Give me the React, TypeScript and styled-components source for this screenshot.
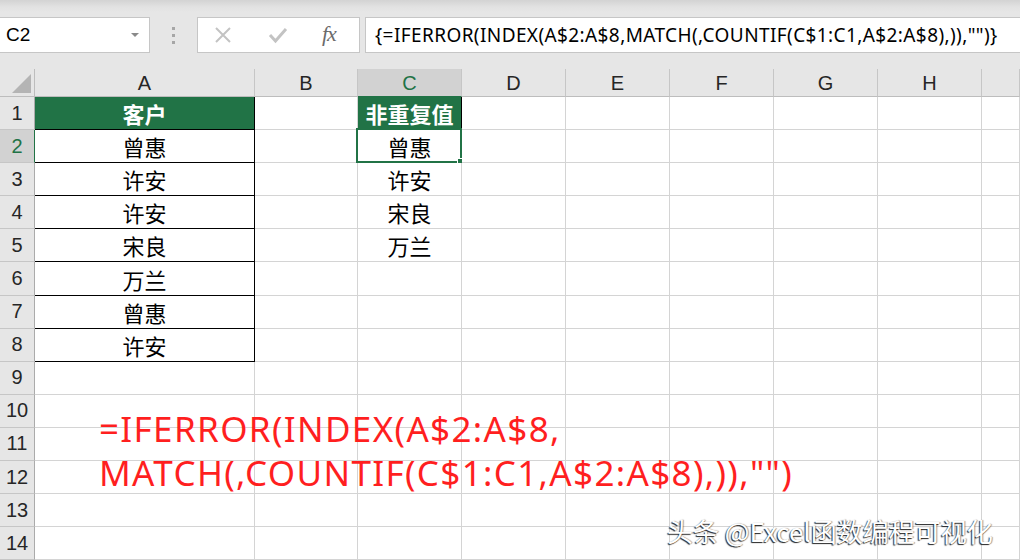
import React from 'react';
import styled, { createGlobalStyle } from 'styled-components';

const GlobalStyle = createGlobalStyle`
  html, body {
    margin: 0;
    padding: 0;
  }
  body {
    width: 1020px;
    height: 560px;
    overflow: hidden;
    background: #ffffff;
    font-family: "Liberation Sans", Arial, sans-serif;
  }
`;

const COLS = ['A', 'B', 'C', 'D', 'E', 'F', 'G', 'H', 'I'];
const ROW_COUNT = 14;
const GREEN = '#217346';

const colA = ['客户', '曾惠', '许安', '许安', '宋良', '万兰', '曾惠', '许安'];
const colC = ['非重复值', '曾惠', '许安', '宋良', '万兰'];

const FORMULA = '{=IFERROR(INDEX(A$2:A$8,MATCH(,COUNTIF(C$1:C1,A$2:A$8),)),"")}';

const Page = styled.div`
  width: 1020px;
  height: 560px;
  display: flex;
  flex-direction: column;
  background: #e6e6e6;
  position: relative;
  overflow: hidden;
`;

const FormulaBar = styled.div`
  height: 69px;
  flex-shrink: 0;
  box-sizing: border-box;
  padding-top: 17px;
  display: flex;
  align-items: flex-start;
  background: linear-gradient(#d3d3d3 0px, #e2e2e2 7px, #e6e6e6 12px);
`;

const NameBox = styled.div`
  width: 150px;
  height: 36px;
  box-sizing: border-box;
  background: #fff;
  border: 1px solid #c6c6c6;
  border-left: none;
  display: flex;
  align-items: center;
  justify-content: space-between;
  padding: 0 10px 0 6px;
  font-size: 19px;
  color: #000;
`;

const DropArrow = styled.span`
  width: 0;
  height: 0;
  border-left: 4px solid transparent;
  border-right: 4px solid transparent;
  border-top: 4px solid #8a8a8a;
`;

const Grip = styled.div`
  width: 47px;
  height: 36px;
  display: flex;
  flex-direction: column;
  align-items: center;
  justify-content: center;
  gap: 4px;
`;

const GripDot = styled.span`
  width: 3px;
  height: 3px;
  background: #a6a6a6;
`;

const FxBox = styled.div`
  width: 163px;
  height: 36px;
  box-sizing: border-box;
  background: #fff;
  border: 1px solid #c6c6c6;
  display: flex;
  align-items: center;
  padding-left: 16px;
  gap: 36px;
`;

const FxLabel = styled.span`
  font-family: "Liberation Serif", "Times New Roman", serif;
  font-style: italic;
  font-size: 22px;
  color: #6b6b6b;
  letter-spacing: -1px;
  margin-left: -2px;
  margin-top: -3px;
`;

const FormulaInput = styled.div`
  flex: 1;
  height: 36px;
  margin-left: 5px;
  box-sizing: border-box;
  background: #fff;
  border: 1px solid #c6c6c6;
  border-right: none;
  display: flex;
  align-items: center;
  padding-left: 9px;
  font-family: "Noto Sans", "Open Sans", sans-serif;
  font-size: 19px;
  letter-spacing: 0.4px;
  color: #000;
  white-space: nowrap;
`;

const Sheet = styled.div`
  flex: 1;
  display: grid;
  grid-template-columns: 35px 220px 103px 104px 104px 104px 104px 104px 104px 1fr;
  grid-template-rows: 28px repeat(${ROW_COUNT}, 33.1px);
  background: #fff;
  position: relative;
`;

const Corner = styled.div`
  background: #e6e6e6;
  border-right: 1px solid #bdbdbd;
  border-bottom: 1px solid #bdbdbd;
  box-sizing: border-box;
  position: relative;
  &::after {
    content: '';
    position: absolute;
    right: 3px;
    bottom: 3px;
    width: 0;
    height: 0;
    border-left: 19px solid transparent;
    border-bottom: 19px solid #b4b4b4;
  }
`;

const ColHead = styled.div<{ $active?: boolean }>`
  box-sizing: border-box;
  background: ${p => (p.$active ? '#d2d2d2' : '#e6e6e6')};
  border-right: 1px solid #c6c6c6;
  border-bottom: 1px solid ${p => (p.$active ? GREEN : '#bdbdbd')};
  display: flex;
  align-items: center;
  justify-content: center;
  padding-top: 2px;
  font-size: 20px;
  color: ${p => (p.$active ? GREEN : '#262626')};
`;

const RowHead = styled.div<{ $active?: boolean }>`
  box-sizing: border-box;
  background: ${p => (p.$active ? '#d2d2d2' : '#e6e6e6')};
  border-right: 1px solid ${p => (p.$active ? GREEN : '#ababab')};
  border-bottom: 1px solid #c6c6c6;
  display: flex;
  align-items: center;
  justify-content: center;
  font-size: 20px;
  color: ${p => (p.$active ? GREEN : '#262626')};
`;

const Cell = styled.div<{ $head?: boolean; $boxed?: boolean }>`
  box-sizing: border-box;
  position: relative;
  border-right: 1px solid ${p => (p.$boxed ? '#000' : '#d4d4d4')};
  border-bottom: 1px solid ${p => (p.$boxed ? '#000' : '#d4d4d4')};
  background: ${p => (p.$head ? GREEN : '#fff')};
  color: ${p => (p.$head ? '#fff' : '#000')};
  font-family: "Noto Sans CJK SC", "Noto Sans", sans-serif;
  font-size: 22px;
  font-weight: ${p => (p.$head ? 700 : 400)};
  display: flex;
  align-items: center;
  justify-content: center;
  white-space: nowrap;
`;

const SelectFrame = styled.div`
  position: absolute;
  left: -2px;
  top: -2px;
  right: -1px;
  bottom: -1px;
  border: 2px solid ${GREEN};
  pointer-events: none;
  &::after {
    content: '';
    position: absolute;
    right: -5px;
    bottom: -5px;
    width: 6px;
    height: 6px;
    background: ${GREEN};
    border: 1px solid #fff;
  }
`;

const Annotation = styled.div`
  position: absolute;
  left: 99px;
  top: 338px;
  color: #ff1f1f;
  font-family: "Noto Sans", "Open Sans", sans-serif;
  font-size: 35px;
  letter-spacing: 1.35px;
  line-height: 44px;
  white-space: nowrap;
`;

const Watermark = styled.div`
  position: absolute;
  left: 667px;
  top: 443px;
  color: #fff;
  font-family: "Noto Sans CJK SC", "Noto Sans", sans-serif;
  font-size: 26px;
  white-space: nowrap;
  text-shadow: -1px 1px 1px rgba(0, 0, 0, 0.85), 1px 0 1px rgba(0, 0, 0, 0.4);
`;

const XIcon = () => (
  <svg width="18" height="18" viewBox="0 0 18 18">
    <path d="M2 2 L16 16 M16 2 L2 16" stroke="#c3c3c3" strokeWidth="2" fill="none" />
  </svg>
);

const CheckIcon = () => (
  <svg width="20" height="18" viewBox="0 0 20 18">
    <path d="M2 9 L7.5 15 L18 3" stroke="#c3c3c3" strokeWidth="3" fill="none" />
  </svg>
);

const cellText = (row: number, col: string) => {
  if (col === 'A') return colA[row - 1];
  if (col === 'C') return colC[row - 1];
  return undefined;
};

const App = () => {
  const rows = Array.from({ length: ROW_COUNT }, (_, i) => i + 1);

  return (
    <Page>
      <GlobalStyle />
      <FormulaBar>
        <NameBox>
          C2
          <DropArrow />
        </NameBox>
        <Grip>
          <GripDot />
          <GripDot />
          <GripDot />
        </Grip>
        <FxBox>
          <XIcon />
          <CheckIcon />
          <FxLabel>fx</FxLabel>
        </FxBox>
        <FormulaInput>{FORMULA}</FormulaInput>
      </FormulaBar>

      <Sheet>
        <Corner />
        {COLS.map(c => (
          <ColHead key={c} $active={c === 'C'}>
            {c === 'I' ? '' : c}
          </ColHead>
        ))}
        {rows.map(r => (
          <React.Fragment key={r}>
            <RowHead $active={r === 2}>{r}</RowHead>
            {COLS.map(c => {
              const text = cellText(r, c);
              const isHead = r === 1 && (c === 'A' || c === 'C');
              const boxed = (c === 'A' && r <= 8) || (c === 'C' && r === 1);
              return (
                <Cell key={c} $head={isHead} $boxed={boxed}>
                  {text}
                  {c === 'C' && r === 2 && <SelectFrame />}
                </Cell>
              );
            })}
          </React.Fragment>
        ))}

        <Annotation>
          =IFERROR(INDEX(A$2:A$8,
          <br />
          MATCH(,COUNTIF(C$1:C1,A$2:A$8),)),"")
        </Annotation>
        <Watermark>头条 @Excel函数编程可视化</Watermark>
      </Sheet>
    </Page>
  );
};

export default App;
